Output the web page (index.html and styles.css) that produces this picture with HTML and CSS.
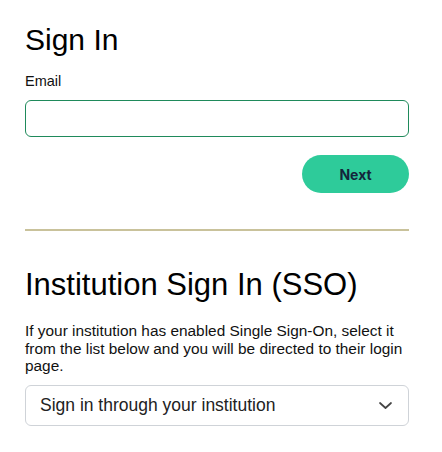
FILE: index.html
```html
<!DOCTYPE html>
<html>
<head>
<meta charset="utf-8">
<link rel="stylesheet" href="styles.css">
</head>
<body>
<main class="page">
  <section class="signin">
    <h1 class="title">Sign In</h1>
    <label class="label" for="email">Email</label>
    <input class="input" id="email" type="email">
    <div class="actions">
      <button class="btn-next" type="button">Next</button>
    </div>
  </section>
  <hr class="divider">
  <section class="sso">
    <h2 class="title title-sso">Institution Sign In (SSO)</h2>
    <p class="desc">If your institution has enabled Single Sign-On, select it from the list below and you will be directed to their login page.</p>
    <div class="select">
      <span class="select-text">Sign in through your institution</span>
      <svg class="chevron" width="13" height="7" viewBox="0 0 13 7"><path d="M1 1 L6.5 6 L12 1" fill="none" stroke="#444" stroke-width="1.7" stroke-linecap="round" stroke-linejoin="round"/></svg>
    </div>
  </section>
</main>
</body>
</html>
```
FILE: styles.css
```css
* { box-sizing: border-box; }
html, body { margin: 0; padding: 0; background: #fff; }
body {
  font-family: "Liberation Sans", Arial, sans-serif;
  color: #111;
}
.page {
  width: 384px;
  margin-left: 25px;
  padding-top: 22px;
}
.title {
  font-size: 30px;
  font-weight: 400;
  line-height: 36px;
  margin: 0;
  color: #000;
}
.title-sso { font-size: 31px; }
.label {
  display: block;
  font-size: 14.5px;
  line-height: 17px;
  margin-top: 15px;
  color: #111;
}
.input {
  display: block;
  width: 100%;
  height: 37px;
  margin-top: 10px;
  border: 1px solid #1f8a5b;
  border-radius: 6px;
  outline: none;
  padding: 0 12px;
  font-size: 16px;
}
.actions {
  display: flex;
  justify-content: flex-end;
  margin-top: 18px;
}
.btn-next {
  width: 107px;
  height: 38px;
  border: none;
  border-radius: 19px;
  background: #2ecb9a;
  color: #14253a;
  font-family: Inter, "Liberation Sans", sans-serif;
  font-weight: 700;
  font-size: 14px;
  padding: 0;
}
.divider {
  border: none;
  height: 2px;
  background: #c9c29b;
  margin: 36px 0 0 0;
}
.sso { padding-top: 36px; }
.desc {
  font-size: 15.4px;
  line-height: 17.5px;
  margin: 19px 0 0 0;
  color: #111;
}
.select {
  display: flex;
  align-items: center;
  justify-content: space-between;
  height: 41px;
  margin-top: 10px;
  border: 1px solid #cfd3d8;
  border-radius: 6px;
  padding: 0 16px 0 14px;
}
.select-text {
  font-size: 17.5px;
  color: #222;
}
.chevron { display: block; }
```
